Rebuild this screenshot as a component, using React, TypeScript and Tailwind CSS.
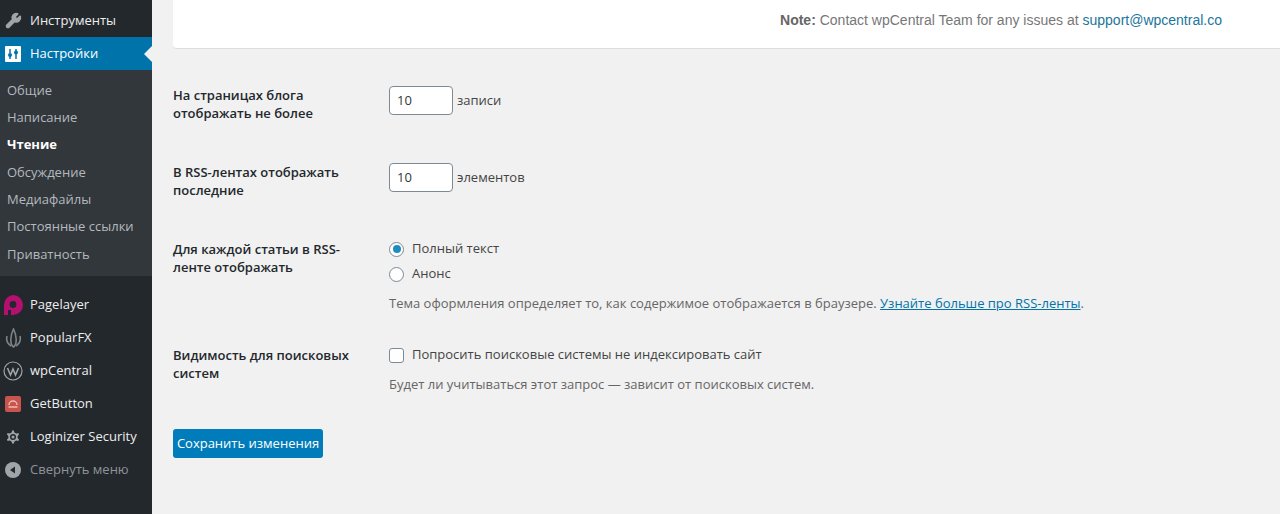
import { Settings, Wrench } from "lucide-react";
import type { ReactNode } from "react";

const subItems = ["Общие", "Написание", "Чтение", "Обсуждение", "Медиафайлы", "Постоянные ссылки", "Приватность"];

function MenuRow({ icon, label, className = "text-[#eeeeee]" }: { icon: ReactNode; label: string; className?: string }) {
  return (
    <div className={`flex h-[33px] items-center ${className}`}>
      <div className="flex w-[30px] shrink-0 justify-center pl-[1px] pr-[5px]">{icon}</div>
      <span>{label}</span>
    </div>
  );
}

function FormRow({ label, children, className = "" }: { label: string; children: ReactNode; className?: string }) {
  return (
    <div className={`flex ${className}`}>
      <div className="w-[216px] shrink-0 pr-[30px] text-[13px] font-semibold leading-[18px] text-[#23282d]">{label}</div>
      <div className="min-w-0 flex-1">{children}</div>
    </div>
  );
}

function NumberInput({ unit }: { unit: string }) {
  return (
    <div className="flex items-center">
      <div className="flex h-[29px] w-[64px] items-center rounded-[4px] border border-[#7e8993] bg-white pl-[7px] text-[13px] text-[#32373c]">10</div>
      <span className="ml-[4px] text-[13px] text-[#444444]">{unit}</span>
    </div>
  );
}

export default function App() {
  return (
    <div className="flex h-[514px] w-[1280px] overflow-hidden bg-[#f1f1f1] font-['Open_Sans','Noto_Sans',sans-serif] text-[13px]">
      <aside className="w-[152px] shrink-0 bg-[#23282d] pt-[4px] text-[13px]">
        <MenuRow icon={<Wrench size={17} fill="#a0a5aa" stroke="#a0a5aa" />} label="Инструменты" />
        <div className="relative flex h-[33px] items-center bg-[#0073aa] text-white">
          <div className="flex w-[30px] shrink-0 justify-center pr-[4px]">
            <svg width="16" height="16" viewBox="0 0 16 16">
              <rect width="16" height="16" rx="1" fill="#fff" />
              <path d="M5 3v4M5 10v3M11 3v2M11 8v5" stroke="#0073aa" strokeWidth="1.5" />
              <circle cx="5" cy="9" r="2" fill="#0073aa" />
              <circle cx="11" cy="6.5" r="2" fill="#0073aa" />
            </svg>
          </div>
          <span>Настройки</span>
          <div className="absolute right-0 top-[9px] h-0 w-0 border-y-[8px] border-r-[8px] border-y-transparent border-r-[#f1f1f1]" />
        </div>
        <div className="flex h-[206px] flex-col bg-[#32373c] pt-[7px]">
          {subItems.map((item) => (
            <div
              key={item}
              className={`flex h-[27.3px] items-center pl-[7px] ${item === "Чтение" ? "font-bold text-white" : "text-[#b4b9be]"}`}
            >
              {item}
            </div>
          ))}
        </div>
        <div className="pt-[12px]">
          <MenuRow
            label="Pagelayer"
            icon={
              <svg width="20" height="20" viewBox="0 0 20 20">
                <path d="M10 0a10 10 0 0 1 0 20H8v-5H5v5H1V10A10 10 0 0 1 10 0z" fill="#b5106f" />
                <circle cx="10" cy="9.5" r="3.4" fill="#23282d" />
              </svg>
            }
          />
          <MenuRow
            label="PopularFX"
            icon={
              <svg width="17" height="20" viewBox="0 0 17 20" fill="none" stroke="#7d8287" strokeWidth="1.6">
                <path d="M8.5 19C4 16 6 6 8.5 1c2.500 5 4.500 15 0 18z" />
                <path d="M6 18C3 16 1 12 2 8M11 18c3-2 5-6 4-10" />
              </svg>
            }
          />
          <MenuRow
            label="wpCentral"
            icon={
              <svg width="20" height="20" viewBox="0 0 20 20" fill="none" stroke="#a0a5aa">
                <circle cx="10" cy="10" r="9" strokeWidth="1.2" />
                <path d="M4.500 7l3 7 2.500-6 2.500 6 3-7" strokeWidth="1.6" />
              </svg>
            }
          />
          <MenuRow
            label="GetButton"
            icon={
              <svg width="16" height="16" viewBox="0 0 16 16" fill="none">
                <rect width="16" height="16" rx="2" fill="#c9544e" />
                <path d="M4 9a4 4 0 1 1 8 0M3.500 11h9" stroke="#eeb9b5" strokeWidth="1.4" />
              </svg>
            }
          />
          <MenuRow icon={<Settings size={18} fill="#a0a5aa" stroke="#23282d" />} label="Loginizer Security" />
          <MenuRow
            label="Свернуть меню"
            className="text-[#8f9499]"
            icon={
              <svg width="16" height="16" viewBox="0 0 16 16">
                <circle cx="8" cy="8" r="8" fill="#a0a5aa" />
                <path d="M10 4.500v7L5 8z" fill="#23282d" />
              </svg>
            }
          />
        </div>
      </aside>

      <main className="min-w-0 flex-1 pl-[21px]">
        <div className="flex h-[49px] items-start justify-end rounded-bl-[4px] border-b border-[#dcdcdc] bg-white pr-[58px] pt-[11px] font-['Liberation_Sans',sans-serif] text-[14px] leading-[18px] text-[#777777]">
          <p>
            <b className="text-[#666666]">Note:</b> Contact wpCentral Team for any issues at{" "}
            <span className="text-[#21759b]">support@wpcentral.co</span>
          </p>
        </div>

        <FormRow label="На страницах блога отображать не более" className="mt-[37px]">
          <NumberInput unit="записи" />
        </FormRow>

        <FormRow label="В RSS-лентах отображать последние" className="mt-[41px]">
          <NumberInput unit="элементов" />
        </FormRow>

        <FormRow label="Для каждой статьи в RSS-ленте отображать" className="mt-[41px]">
          <div className="flex h-[18px] items-center gap-[8px] text-[#444444]">
            <span className="flex h-[15px] w-[15px] items-center justify-center rounded-full border border-[#7e8993] bg-white">
              <span className="h-[8px] w-[8px] rounded-full bg-[#1e8cbe]" />
            </span>
            Полный текст
          </div>
          <div className="mt-[7px] flex h-[18px] items-center gap-[8px] text-[#444444]">
            <span className="h-[15px] w-[15px] rounded-full border border-[#7e8993] bg-white" />
            Анонс
          </div>
          <p className="mt-[11px] text-[13px] leading-[18px] text-[#666666]">
            Тема оформления определяет то, как содержимое отображается в браузере.{" "}
            <span className="text-[#0073aa] underline">Узнайте больше про RSS-ленты</span>.
          </p>
        </FormRow>

        <FormRow label="Видимость для поисковых систем" className="mt-[34px]">
          <div className="flex h-[18px] items-center gap-[8px] text-[#444444]">
            <span className="h-[15px] w-[15px] rounded-[3px] border border-[#7e8993] bg-white" />
            Попросить поисковые системы не индексировать сайт
          </div>
          <p className="mt-[11px] text-[13px] leading-[18px] text-[#666666]">
            Будет ли учитываться этот запрос — зависит от поисковых систем.
          </p>
        </FormRow>

        <button className="mt-[36px] flex h-[29px] w-[150px] items-center justify-center rounded-[3px] bg-[#007cba] text-[13px] text-white">
          Сохранить изменения
        </button>
      </main>
    </div>
  );
}
